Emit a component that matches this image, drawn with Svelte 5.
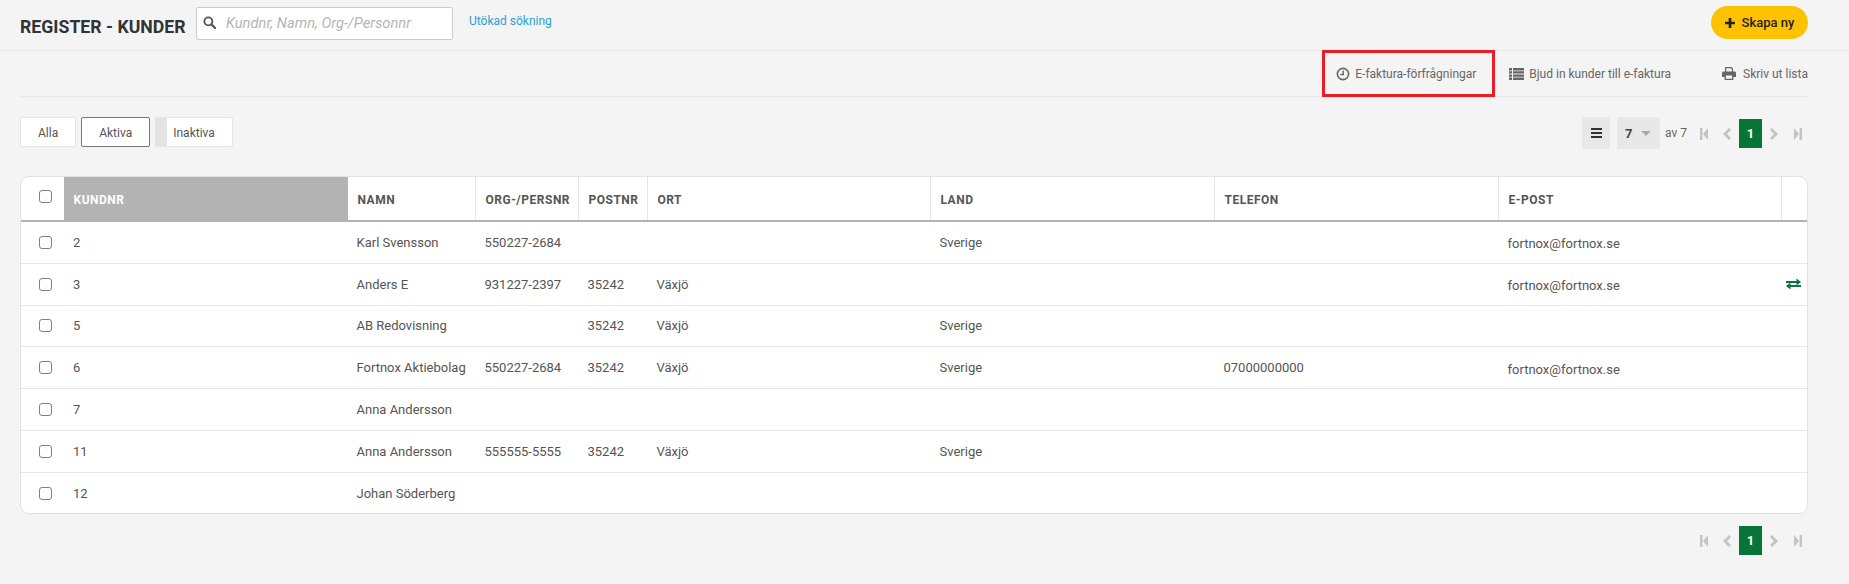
<script lang="ts">
  const columns = ['NAMN', 'ORG-/PERSNR', 'POSTNR', 'ORT', 'LAND', 'TELEFON', 'E-POST'];

  const customers = [
    { nr: '2', name: 'Karl Svensson', org: '550227-2684', post: '', city: '', country: 'Sverige', phone: '', email: 'fortnox@fortnox.se', linked: false },
    { nr: '3', name: 'Anders E', org: '931227-2397', post: '35242', city: 'Växjö', country: '', phone: '', email: 'fortnox@fortnox.se', linked: true },
    { nr: '5', name: 'AB Redovisning', org: '', post: '35242', city: 'Växjö', country: 'Sverige', phone: '', email: '', linked: false },
    { nr: '6', name: 'Fortnox Aktiebolag', org: '550227-2684', post: '35242', city: 'Växjö', country: 'Sverige', phone: '07000000000', email: 'fortnox@fortnox.se', linked: false },
    { nr: '7', name: 'Anna Andersson', org: '', post: '', city: '', country: '', phone: '', email: '', linked: false },
    { nr: '11', name: 'Anna Andersson', org: '555555-5555', post: '35242', city: 'Växjö', country: 'Sverige', phone: '', email: '', linked: false },
    { nr: '12', name: 'Johan Söderberg', org: '', post: '', city: '', country: '', phone: '', email: '', linked: false },
  ];
</script>

{#snippet pageIcons()}
  <div class="pages">
    <svg class="page-icon first" viewBox="0 0 8 12"><path d="M0 0h2.400v12H0zM8 0v12L3 6z" /></svg>
    <svg class="page-icon prev" viewBox="0 0 8 12"><path d="M6 0l2 2-4 4 4 4-2 2-6-6z" /></svg>
    <span class="current">1</span>
    <svg class="page-icon next" viewBox="0 0 8 12"><path d="M2 0L0 2l4 4-4 4 2 2 6-6z" /></svg>
    <svg class="page-icon last" viewBox="0 0 8 12"><path d="M8 0H5.600v12H8zM0 0v12l5-6z" /></svg>
  </div>
{/snippet}

<div class="page">
  <header class="topbar">
    <h1>REGISTER - KUNDER</h1>
    <div class="search">
      <svg viewBox="0 0 14 14" class="search-icon">
        <circle cx="5.8" cy="5.8" r="4.3" fill="none" stroke="currentColor" stroke-width="2" />
        <path d="M9 9l4 4" stroke="currentColor" stroke-width="2.4" stroke-linecap="round" />
      </svg>
      <span class="placeholder">Kundnr, Namn, Org-/Personnr</span>
    </div>
    <span class="extended">Utökad sökning</span>
    <button class="create">
      <svg viewBox="0 0 12 12"><path d="M4.4 0h3.2v4.4H12v3.2H7.6V12H4.4V7.6H0V4.4h4.4z" /></svg>
      Skapa ny
    </button>
  </header>

  <div class="actions">
    <span class="action marked">
      <svg class="clock" viewBox="0 0 14 14">
        <circle cx="7" cy="7" r="5.6" fill="none" stroke="currentColor" stroke-width="1.6" />
        <path d="M7.3 3.6v3.9H4.4" fill="none" stroke="currentColor" stroke-width="1.4" />
      </svg>
      E-faktura-förfrågningar
    </span>
    <span class="action invite">
      <svg class="list" viewBox="0 0 15 12">
        <path d="M0 0h3v2.4H0zM4 0h11v2.4H4zM0 3.2h3v2.4H0zM4 3.2h11v2.4H4zM0 6.4h3v2.4H0zM4 6.4h11v2.4H4zM0 9.6h3V12H0zM4 9.6h11V12H4z" />
      </svg>
      Bjud in kunder till e-faktura
    </span>
    <span class="action print">
      <svg class="printer" viewBox="0 0 14 13">
        <path d="M3 0h6.500L11 1.500V5H9.800V2.200L9 1.200H4.200V5H3zM1.500 4.600h11c.8 0 1.500.7 1.500 1.500V10h-2.600v3H2.600V10H0V6.100c0-.8.7-1.500 1.500-1.500zM3.900 8.600v3.200h6.200V8.600z" />
      </svg>
      Skriv ut lista
    </span>
  </div>

  <div class="toolbar">
    <div class="filters">
      <button class="filter">Alla</button>
      <button class="filter active">Aktiva</button>
      <button class="filter inactive">Inaktiva</button>
    </div>
    <div class="pager">
      <span class="menu-btn"><i></i><i></i><i></i></span>
      <span class="size-select">7<b></b></span>
      <span class="count">av 7</span>
      {@render pageIcons()}
    </div>
  </div>

  <div class="table">
    <div class="row head">
      <div class="cell check"><span class="box"></span></div>
      <div class="cell sorted">KUNDNR</div>
      {#each columns as col}
        <div class="cell">{col}</div>
      {/each}
      <div class="cell"></div>
    </div>
    {#each customers as c}
      <div class="row">
        <div class="cell check"><span class="box"></span></div>
        <div class="cell nr">{c.nr}</div>
        <div class="cell">{c.name}</div>
        <div class="cell">{c.org}</div>
        <div class="cell">{c.post}</div>
        <div class="cell">{c.city}</div>
        <div class="cell">{c.country}</div>
        <div class="cell">{c.phone}</div>
        <div class="cell email">{c.email}</div>
        <div class="cell link">
          {#if c.linked}
            <svg viewBox="0 0 15 12"><path d="M0 3h10.500V.5L15 4l-4.500 3.500V5H0zM15 7H4.500V4.500L0 8l4.500 3.500V9H15z" /></svg>
          {/if}
        </div>
      </div>
    {/each}
  </div>

  <div class="footer">
    {@render pageIcons()}
  </div>
</div>

<style>
  :global(body) {
    margin: 0;
    background: #f4f4f4;
  }

  .page {
    height: 584px;
    overflow: hidden;
    font-family: Roboto, 'Liberation Sans', sans-serif;
    font-size: 13px;
    color: #555;
  }

  .topbar {
    display: flex;
    align-items: flex-start;
    height: 50px;
    padding: 0 41px 0 20px;
    border-bottom: 1px solid #e8e8e8;
  }

  h1 {
    margin: 17px 11px 0 0;
    width: 165px;
    font-size: 17.7px;
    line-height: 20px;
    font-weight: 700;
    color: #333;
    white-space: nowrap;
  }

  .search {
    display: flex;
    align-items: center;
    box-sizing: border-box;
    width: 257px;
    height: 33px;
    margin-top: 7px;
    background: #fff;
    border: 1px solid #ccc;
    border-radius: 2px;
  }

  .search-icon {
    width: 13px;
    height: 13px;
    margin: 0 10px 3px 6px;
    color: #555;
  }

  .placeholder {
    font-style: italic;
    font-size: 14.7px;
    color: #b5b5b5;
    margin-bottom: 1px;
  }

  .extended {
    margin: 14px 0 0 16px;
    font-size: 12px;
    color: #2a9fd8;
  }

  .create {
    display: flex;
    align-items: center;
    justify-content: center;
    gap: 7px;
    width: 97px;
    height: 33px;
    margin: 6px 0 0 auto;
    padding: 0;
    background: #ffc200;
    border: 0;
    border-radius: 17px;
    font: 500 13px Roboto, sans-serif;
    color: #222;
  }

  .create svg {
    width: 10px;
    height: 10px;
    fill: #222;
  }

  .actions {
    display: flex;
    justify-content: flex-end;
    align-items: center;
    height: 45px;
    margin: 0 41px 0 20px;
    border-bottom: 1px solid #e8e8e8;
    font-size: 12px;
    color: #666;
  }

  .action {
    display: flex;
    align-items: center;
  }

  .action svg {
    fill: currentColor;
    flex-shrink: 0;
  }

  .marked {
    box-sizing: border-box;
    width: 173px;
    height: 47px;
    margin: -1px 14px -1px 0;
    padding-left: 11px;
    border: 3px solid #ed1c24;
  }

  .clock {
    width: 14px;
    height: 14px;
    margin-right: 5px;
  }

  .list {
    width: 15px;
    height: 12px;
    margin-right: 5px;
  }

  .printer {
    width: 14px;
    height: 13px;
    margin-right: 7px;
  }

  .invite {
    margin-right: 51px;
  }

  .toolbar {
    display: flex;
    justify-content: space-between;
    height: 32px;
    margin: 20px 41px 27px 20px;
  }

  .filters {
    display: flex;
    gap: 5px;
    height: 30px;
  }

  .filter {
    box-sizing: border-box;
    height: 30px;
    padding: 1px 17px 0;
    background: #fff;
    border: 1px solid #e6e6e6;
    border-radius: 2px;
    font: 12px Roboto, sans-serif;
    color: #555;
  }

  .active {
    border-color: #777;
  }

  .inactive {
    padding: 1px 17px 0 6px;
    border-left: 12px solid #e4e4e4;
  }

  .pager {
    display: flex;
    align-items: flex-start;
  }

  .menu-btn {
    display: flex;
    flex-direction: column;
    justify-content: center;
    gap: 2px;
    width: 28px;
    height: 32px;
    padding: 0 8.500px;
    box-sizing: border-box;
    margin-right: 7px;
    background: #e8e8e8;
    border-radius: 2px;
  }

  .menu-btn i {
    display: block;
    height: 2px;
    background: #333;
  }

  .size-select {
    display: flex;
    align-items: center;
    justify-content: space-between;
    box-sizing: border-box;
    width: 43px;
    height: 32px;
    padding: 0 9px 0 8px;
    background: #e8e8e8;
    border-radius: 2px;
    font-weight: 700;
    font-size: 13px;
    color: #444;
  }

  .size-select b {
    width: 0;
    height: 0;
    border: 5px solid transparent;
    border-top: 5px solid #aaa;
    border-bottom: 0;
  }

  .count {
    margin: 9px 13px 0 5px;
    font-size: 12px;
    color: #666;
  }

  .pages {
    display: flex;
    align-items: center;
    height: 29px;
    margin-top: 2px;
  }

  .page-icon {
    width: 8px;
    height: 12px;
    fill: #c4c4c4;
  }

  .first {
    margin-right: 15px;
  }

  .prev {
    margin-right: 8px;
  }

  .next {
    margin: 0 16px 0 8px;
  }

  .last {
    margin-right: 6px;
  }

  .current {
    width: 23px;
    height: 29px;
    background: #077537;
    color: #fff;
    font-weight: 700;
    font-size: 13px;
    line-height: 29px;
    text-align: center;
  }

  .table {
    box-sizing: border-box;
    width: 1788px;
    margin-left: 20px;
    height: 338px;
    background: #fff;
    border: 1px solid #e2e2e2;
    border-radius: 9px;
    overflow: hidden;
  }

  .row {
    display: grid;
    grid-template-columns: 43px 284px 128px 103px 69px 283px 284px 284px 283px 1fr;
    height: 41.75px;
    box-sizing: border-box;
    border-bottom: 1px solid #e6e6e6;
    align-items: center;
  }

  .row:last-child {
    border-bottom: 0;
  }

  .cell {
    padding-left: 8.500px;
    white-space: nowrap;
  }

  .check {
    padding-left: 18px;
  }

  .nr {
    padding-left: 9px;
  }

  .email {
    padding-top: 3px;
  }

  .box {
    display: block;
    box-sizing: border-box;
    width: 13px;
    height: 13px;
    border: 1.5px solid #808080;
    border-radius: 3px;
    background: #fff;
  }

  .head {
    height: 45px;
    align-items: stretch;
    border-bottom: 2px solid #b3b3b3;
    font-size: 12px;
    font-weight: 700;
    letter-spacing: 0.5px;
    color: #555;
  }

  .head .cell {
    display: flex;
    align-items: center;
    padding-top: 3px;
    padding-left: 9.500px;
    border-right: 1px solid #e6e6e6;
  }

  .head .cell:last-child {
    border-right: 0;
  }

  .head .check {
    padding: 0 0 5px 18px;
    border-right: 0;
  }

  .head .sorted {
    background: #b3b3b3;
    color: #fff;
    border-right: 0;
  }

  .link {
    display: flex;
    align-items: center;
    padding-left: 4px;
  }

  .link svg {
    width: 15px;
    height: 12px;
    fill: #077537;
  }

  .footer {
    display: flex;
    justify-content: flex-end;
    margin: 10px 41px 0 0;
  }
</style>
